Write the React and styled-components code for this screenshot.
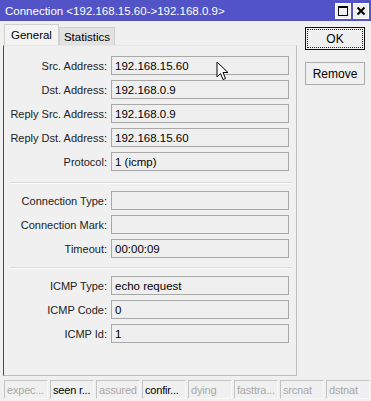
import React from "react";
import styled, { createGlobalStyle } from "styled-components";

const Global = createGlobalStyle`
  html, body { margin: 0; padding: 0; background: #f0f0f0; }
  body { font-family: "Liberation Sans", Arial, sans-serif; font-size: 11px; color: #000; }
`;

const Win = styled.div`
  width: 371px;
  height: 401px;
  background: #f0f0f0;
  display: flex;
  flex-direction: column;
  overflow: hidden;
  position: relative;
`;

const TitleBar = styled.div`
  height: 21px;
  background: #5153c6;
  display: flex;
  align-items: center;
  padding: 0 2px 0 5px;
  color: #fff;
  font-size: 11.5px;
`;

const TitleText = styled.div`
  flex: 1;
`;

const WinBtn = styled.div`
  width: 14px;
  height: 14px;
  background: #f0f0f0;
  border: 1px solid #fff;
  margin-left: 2px;
  display: flex;
  align-items: center;
  justify-content: center;
`;

const Body = styled.div`
  flex: 1;
  display: flex;
  padding: 3px 0 0 3px;
`;

const LeftCol = styled.div`
  width: 294px;
  display: flex;
  flex-direction: column;
`;

const Tabs = styled.div`
  display: flex;
  align-items: flex-end;
  height: 21px;
  padding-left: 1px;
`;

const Tab = styled.div`
  height: ${(p) => (p.$active ? "21px" : "18px")};
  padding: 0 ${(p) => (p.$active ? "6px" : "4px")};
  background: ${(p) => (p.$active ? "#f4f4f4" : "#e2e2e2")};
  border: 1px solid #d0d0d0;
  border-bottom: none;
  display: flex;
  align-items: center;
  box-sizing: border-box;
  font-size: 11.5px;
`;

const Panel = styled.div`
  height: 331px;
  box-sizing: border-box;
  border-left: 1px solid #4a4a4a;
  border-right: 1px solid #bdbdbd;
  border-bottom: 1px solid #bdbdbd;
  border-top: 1px solid #e6e6e6;
  padding: 10px 0 0 0;
  display: flex;
  flex-direction: column;
`;

const Grid = styled.div`
  display: grid;
  grid-template-columns: 103px 178px;
  column-gap: 4px;
  row-gap: 5px;
  align-items: center;
`;

const Label = styled.div`
  text-align: right;
  white-space: nowrap;
  color: #222;
`;

const Field = styled.div`
  height: 19px;
  box-sizing: border-box;
  border: 1px solid #a8a8a8;
  background: #efefef;
  padding: 0 3px;
  display: flex;
  align-items: center;
  white-space: nowrap;
  font-size: 11.5px;
`;

const Sep = styled.div`
  margin: ${(p) => p.$m};
  height: 1px;
  background: #dadada;
  border-bottom: 1px solid #fbfbfb;
  margin-left: 6px;
  margin-right: 4px;
`;

const RightCol = styled.div`
  display: flex;
  flex-direction: column;
  padding: 3px 0 0 8px;
  gap: 12px;
`;

const Button = styled.div`
  width: 60px;
  height: 23px;
  box-sizing: border-box;
  border: 1px solid ${(p) => (p.$def ? "#111" : "#adadad")};
  background: #f0f0f0;
  display: flex;
  align-items: center;
  justify-content: center;
  position: relative;
  font-size: 12px;
  &::after {
    content: "";
    display: ${(p) => (p.$def ? "block" : "none")};
    position: absolute;
    inset: 1px;
    border: 1px dotted #222;
  }
`;

const Status = styled.div`
  display: flex;
  gap: 2px;
  padding: 4px 0 0 4px;
  height: 20px;
  box-sizing: content-box;
  margin-bottom: 1px;
`;

const StatusBox = styled.div`
  width: 44px;
  height: 19px;
  box-sizing: border-box;
  border: 1px solid #c4c4c4;
  border-right-color: #f8f8f8;
  border-bottom-color: #f8f8f8;
  padding: 0 2px;
  display: flex;
  align-items: center;
  overflow: hidden;
  white-space: nowrap;
  font-size: 11px;
  letter-spacing: -0.2px;
  color: ${(p) => (p.$on ? "#000" : "#a9a9a9")};
`;

const Cursor = styled.svg`
  position: absolute;
  left: 216px;
  top: 61px;
`;

const rows1 = [
  ["Src. Address:", "192.168.15.60"],
  ["Dst. Address:", "192.168.0.9"],
  ["Reply Src. Address:", "192.168.0.9"],
  ["Reply Dst. Address:", "192.168.15.60"],
  ["Protocol:", "1 (icmp)"],
];
const rows2 = [
  ["Connection Type:", ""],
  ["Connection Mark:", ""],
  ["Timeout:", "00:00:09"],
];
const rows3 = [
  ["ICMP Type:", "echo request"],
  ["ICMP Code:", "0"],
  ["ICMP Id:", "1"],
];

const flags = [
  ["expec...", false],
  ["seen r...", true],
  ["assured", false],
  ["confir...", true],
  ["dying", false],
  ["fasttra...", false],
  ["srcnat", false],
  ["dstnat", false],
];

function Rows({ rows }) {
  return (
    <Grid>
      {rows.map(([l, v]) => (
        <React.Fragment key={l}>
          <Label>{l}</Label>
          <Field>{v}</Field>
        </React.Fragment>
      ))}
    </Grid>
  );
}

export default function App() {
  return (
    <>
      <Global />
      <Win>
        <TitleBar>
          <TitleText>Connection &lt;192.168.15.60-&gt;192.168.0.9&gt;</TitleText>
          <WinBtn>
            <svg width="10" height="10" viewBox="0 0 10 10">
              <rect x="0.5" y="0.5" width="9" height="9" fill="none" stroke="#000" />
              <line x1="0" y1="1.5" x2="10" y2="1.5" stroke="#000" />
            </svg>
          </WinBtn>
          <WinBtn>
            <svg width="10" height="10" viewBox="0 0 10 10">
              <path d="M1.5 1.5 L8.5 8.5 M8.5 1.5 L1.5 8.5" stroke="#000" strokeWidth="2" />
            </svg>
          </WinBtn>
        </TitleBar>
        <Body>
          <LeftCol>
            <Tabs>
              <Tab $active>General</Tab>
              <Tab>Statistics</Tab>
            </Tabs>
            <Panel>
              <Rows rows={rows1} />
              <Sep $m="11px 0 7px" />
              <Rows rows={rows2} />
              <Sep $m="9px 0 7px" />
              <Rows rows={rows3} />
            </Panel>
          </LeftCol>
          <RightCol>
            <Button $def>OK</Button>
            <Button>Remove</Button>
          </RightCol>
        </Body>
        <Status>
          {flags.map(([t, on]) => (
            <StatusBox key={t} $on={on}>{t}</StatusBox>
          ))}
        </Status>
        <Cursor width="13" height="20" viewBox="0 0 13 20">
          <path d="M1 1 L1 16 L4.5 12.5 L7 18.5 L9.5 17.5 L7 11.5 L12 11.5 Z" fill="#fff" stroke="#000" strokeWidth="1" strokeLinejoin="round" />
        </Cursor>
      </Win>
    </>
  );
}
